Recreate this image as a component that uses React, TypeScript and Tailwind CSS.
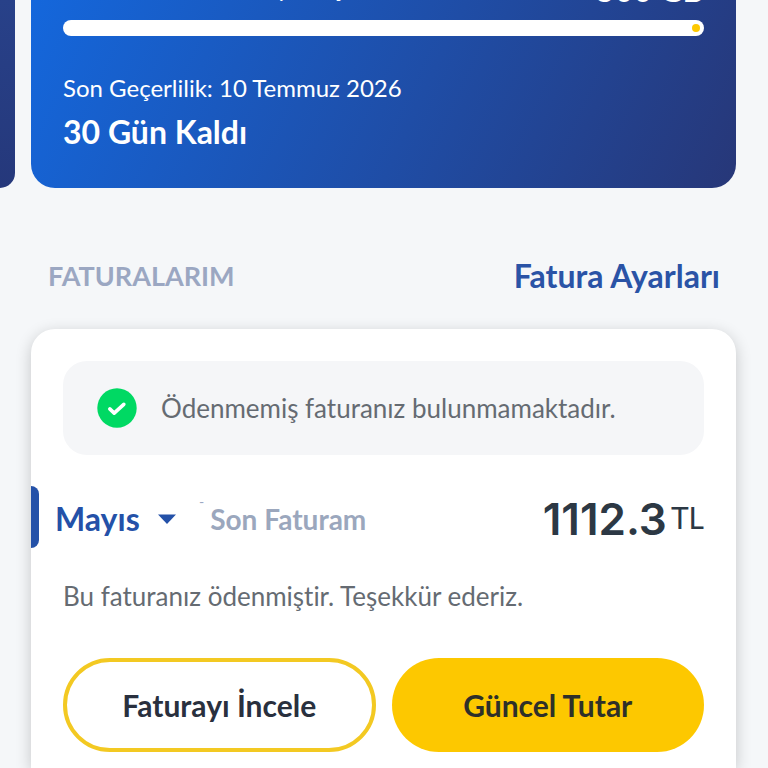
import { useState } from 'react'

const MONTHS = ['Mayıs', 'Nisan', 'Mart']

function UsageCarousel() {
  return (
    <section className="flex gap-4 pr-8">
      {/* Edge of the previous package card */}
      <div className="w-[15px] shrink-0 rounded-br-3xl bg-linear-to-b from-[#284189] to-[#25387b]" />

      <article className="min-w-0 flex-1 rounded-b-3xl bg-linear-[115deg] from-[#1467dc] via-[#1f4da6] via-55% to-[#273778] px-8 pb-9 text-white">
        <div className="flex h-2 items-end justify-between overflow-hidden">
          <span className="pl-[214px] text-2xl leading-10">yurt içi</span>
          <span className="text-[32px] leading-9 font-black">500 GB</span>
        </div>
        <div className="mt-3 flex h-4 items-center justify-end rounded-full bg-white px-1">
          <span className="size-2 rounded-full bg-[#fdc800]" />
        </div>
        <p className="mt-9 text-2xl leading-8">Son Geçerlilik: 10 Temmuz 2026</p>
        <p className="mt-2 text-[32px] leading-10 font-bold">30 Gün Kaldı</p>
      </article>
    </section>
  )
}

function PaidNotice() {
  return (
    <div className="mx-8 flex items-center gap-6 rounded-3xl bg-[#f5f6f8] px-[34px] py-[27px]">
      <svg viewBox="0 0 40 40" className="size-10 shrink-0" aria-hidden="true">
        <circle cx="20" cy="20" r="19.7" fill="#00d963" />
        <path
          d="M12.8 20.9l4.4 4.2 9.6-8.8"
          fill="none"
          stroke="#fff"
          strokeWidth="3.6"
          strokeLinecap="round"
          strokeLinejoin="round"
        />
      </svg>
      <p className="text-[26px] leading-9 whitespace-nowrap text-[#656b72]">
        Ödenmemiş faturanız bulunmamaktadır.
      </p>
    </div>
  )
}

export default function App() {
  const [month, setMonth] = useState(MONTHS[0])

  return (
    <main className="flex min-h-screen flex-col overflow-hidden bg-[#f5f7f9] font-['Lato','Open_Sans',sans-serif] [font-variant-ligatures:none]">
      <UsageCarousel />

      <div className="mt-[70px] flex items-center justify-between px-12">
        <h2 className="text-[27px] leading-9 font-bold text-[#9ba7c2]">FATURALARIM</h2>
        <a href="#ayarlar" className="text-[32px] leading-9 font-bold text-[#2a53a6]">
          Fatura Ayarları
        </a>
      </div>

      <section className="mr-8 ml-[31px] mt-[35px] flex-1 rounded-t-3xl bg-white pt-8 pb-4 shadow-[0_4px_16px_rgba(0,0,0,0.2)]">
        <PaidNotice />

        <div className="mt-[31px] flex h-[62px] pr-8">
          <span className="w-2 rounded-r-lg bg-[#2451a8]" />
          <div className="flex flex-1 items-center pt-1">
            <label className="relative ml-4 flex items-center">
              <select
                aria-label="Fatura ayı"
                value={month}
                onChange={(e) => setMonth(e.target.value)}
                className="w-32 appearance-none bg-transparent text-[32px] leading-10 font-bold text-[#2451a8]"
              >
                {MONTHS.map((name) => (
                  <option key={name}>{name}</option>
                ))}
              </select>
              <svg viewBox="0 0 20 11" className="pointer-events-none absolute right-1.5 h-[11px] w-5" aria-hidden="true">
                <path d="M1 .5h18L10 10z" fill="#2451a8" />
              </svg>
            </label>
            <span className="ml-4 self-start pt-1 text-sm leading-4 text-[#9ba7c2]">-</span>
            <span className="ml-1.5 text-[28px] leading-10 font-bold text-[#9ba7bd]">Son Faturam</span>
            <p className="ml-auto flex items-start text-[#2c3844]">
              <span className="font-['Inter','Lato',sans-serif] text-[44px] leading-[66px] font-semibold">1112.3</span>
              <span className="ml-1 text-[30px] leading-[62px]">TL</span>
            </p>
          </div>
        </div>

        <p className="mx-8 mt-[30px] text-[26px] leading-9 text-[#656b72]">
          Bu faturanız ödenmiştir. Teşekkür ederiz.
        </p>

        <div className="mx-8 mt-11 grid grid-cols-2 gap-4 text-[30px] font-bold text-[#29303e]">
          <button type="button" className="h-[94px] rounded-full border-4 border-[#f3c922] bg-white">
            Faturayı İncele
          </button>
          <button type="button" className="h-[94px] rounded-full bg-[#fdc800] text-[#2e3029]">
            Güncel Tutar
          </button>
        </div>
      </section>
    </main>
  )
}
